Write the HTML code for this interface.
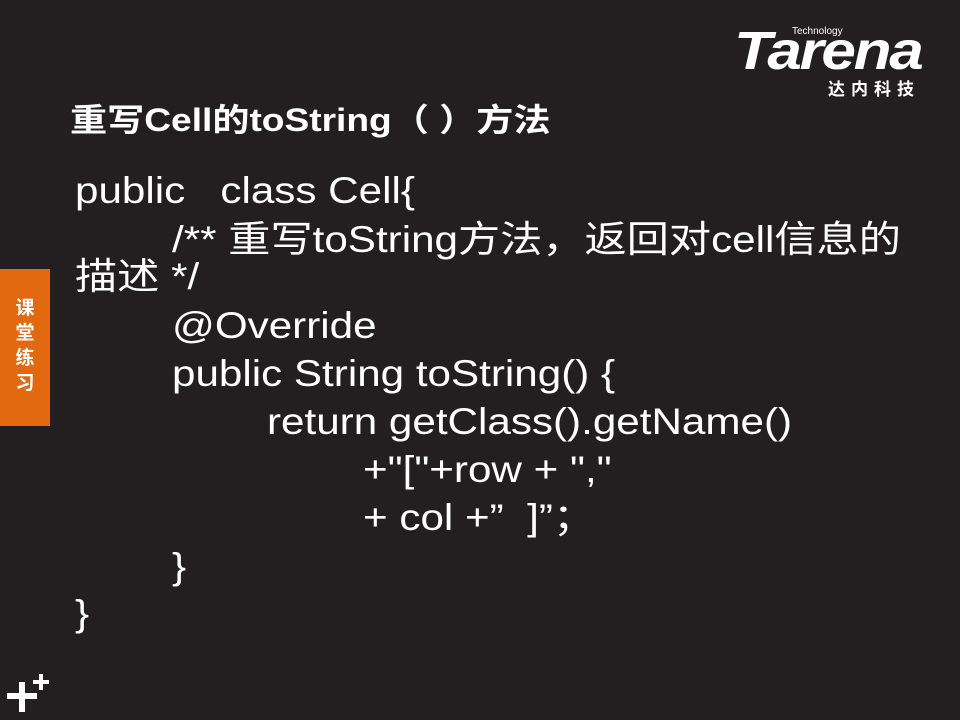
<!DOCTYPE html>
<html><head><meta charset="utf-8"><style>
body{margin:0;width:960px;height:720px;background:#231f20;position:relative;overflow:hidden;font-family:"Liberation Sans","Noto Sans CJK SC",sans-serif;color:#fff}
.l{position:absolute;font-size:37px;white-space:pre;line-height:1;transform:scaleX(1.14);transform-origin:0 0}
.t{position:absolute;left:70px;top:95px;font-size:32px;font-weight:bold;white-space:pre;transform:scaleX(1.16);transform-origin:0 0}
.tab{position:absolute;left:0;top:269px;width:50px;height:157px;background:#e2690f;font-weight:bold;font-size:19px;text-align:center;line-height:25px;padding-top:27px;box-sizing:border-box}
</style></head><body>
<div style="position:absolute;top:26px;font-size:10px;left:792px">Technology</div>
<div style="position:absolute;left:734px;top:24px;font-size:54px;font-weight:bold;font-style:italic;letter-spacing:-2px;line-height:1;transform:scaleX(1.15);transform-origin:0 0">Tarena</div>
<div style="position:absolute;left:828px;top:75px;font-size:17px;font-weight:bold;letter-spacing:6px">达内科技</div>
<div class="t">重写Cell的toString（ ）方法</div>
<div class="tab">课<br>堂<br>练<br>习</div>
<div class="l" style="left:75px;top:172px">public   class Cell{</div>
<div class="l" style="left:172px;top:221px">/** 重写toString方法，返回对cell信息的</div>
<div class="l" style="left:75px;top:258px">描述 */</div>
<div class="l" style="left:172px;top:307px">@Override</div>
<div class="l" style="left:172px;top:355px">public String toString() {</div>
<div class="l" style="left:267px;top:403px">return getClass().getName()</div>
<div class="l" style="left:363px;top:451px">+"["+row + ","</div>
<div class="l" style="left:363px;top:499px">+ col +”  ]”；</div>
<div class="l" style="left:172px;top:548px">}</div>
<div class="l" style="left:75px;top:595px">}</div>
<svg style="position:absolute;left:0;top:660px" width="60" height="60"><path d="M7 36h30M22 22v30" stroke="#fff" stroke-width="6"/><path d="M33 22h16M41 14v16" stroke="#fff" stroke-width="4"/></svg>
</body></html>
